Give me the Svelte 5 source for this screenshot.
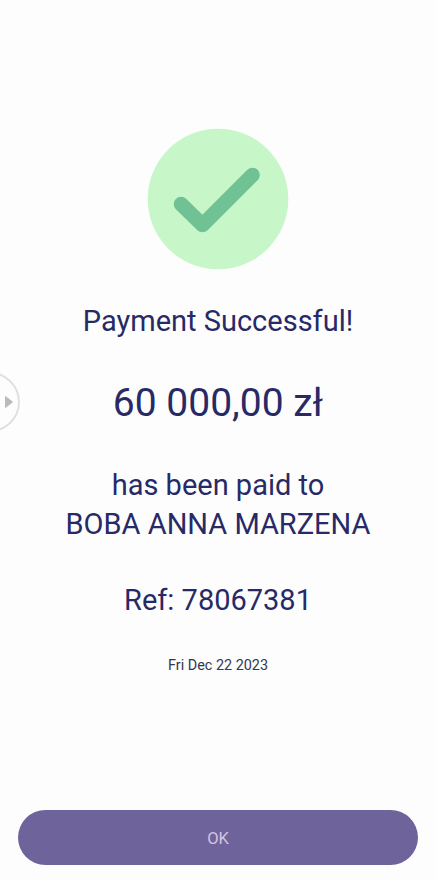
<script>
    const payment = {
        title: 'Payment Successful!',
        amount: '60 000,00 zł',
        payee: 'BOBA ANNA MARZENA',
        reference: '78067381',
        date: 'Fri Dec 22 2023'
    };
</script>

<main class="screen">
    <svg class="check" viewBox="0 0 142 142" aria-hidden="true">
        <circle cx="71" cy="71" r="70.3" fill="#c7f6c9" />
        <path d="M34 76 L55.5 97 L105.5 47" fill="none" stroke="#70c193" stroke-width="14.6" stroke-linecap="round" stroke-linejoin="round" />
    </svg>

    <h1 class="title">{payment.title}</h1>
    <p class="amount">{payment.amount}</p>
    <p class="payee">has been paid to<br />{payment.payee}</p>
    <p class="reference">Ref: {payment.reference}</p>
    <p class="date">{payment.date}</p>

    <button class="ok">OK</button>

    <!-- edge panel handle -->
    <div class="handle">
        <svg width="8" height="12" viewBox="0 0 8 12"><path d="M0.5 0.5 L7.5 6 L0.5 11.5 Z" fill="#bababa" stroke="#bababa" stroke-linejoin="round" /></svg>
    </div>
</main>

<style>
    :global(body) {
        background: #fdfdfd;
    }

    .screen {
        position: relative;
        box-sizing: border-box;
        display: flex;
        flex-direction: column;
        align-items: center;
        height: 880px;
        padding: 128px 18px 15px;
        overflow: hidden;
        font-family: Roboto, sans-serif;
        color: #272a66;
        text-align: center;
    }

    .check {
        width: 142px;
        height: 142px;
    }

    h1, p {
        margin: 0;
        font-weight: 400;
        white-space: nowrap;
    }

    .title {
        margin-top: 32px;
        font-size: 29px;
        line-height: 39px;
    }

    .amount {
        margin-top: 36px;
        font-size: 39px;
        line-height: 52px;
    }

    .payee {
        margin-top: 37px;
        font-size: 29px;
        line-height: 39px;
    }

    .reference {
        margin-top: 37px;
        font-size: 29px;
        line-height: 39px;
    }

    .date {
        margin-top: 36px;
        color: #343650;
        font-size: 14.4px;
        line-height: 20px;
    }

    .ok {
        width: 100%;
        height: 55px;
        margin-top: auto;
        padding: 2px 0 0;
        border: none;
        border-radius: 28px;
        background: #6f639c;
        color: #d5c3df;
        font-family: inherit;
        font-size: 16.5px;
    }

    .handle {
        position: absolute;
        top: 372px;
        left: -40px;
        box-sizing: border-box;
        display: flex;
        align-items: center;
        justify-content: flex-end;
        width: 60px;
        height: 60px;
        padding-right: 5px;
        border: 2px solid #e0e0e0;
        border-radius: 50%;
    }
</style>
